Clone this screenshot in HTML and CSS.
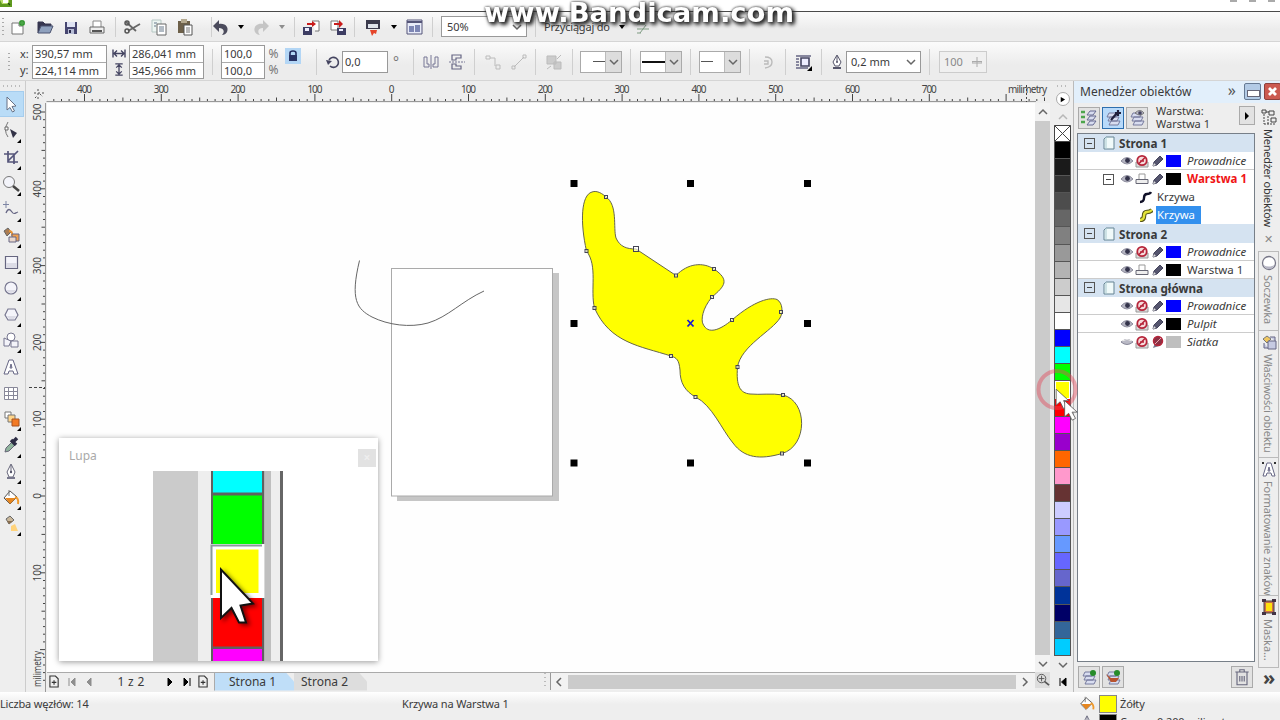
FILE: index.html
```
<!DOCTYPE html>
<html lang="pl">

<head>
    <meta charset="UTF-8">
    <title>Menedżer obiektów</title>
    <link rel="stylesheet" href="styles.css">
</head>

<body>
    <!-- icon sprite -->
    <svg class="sprite">
        <symbol id="i-new" viewBox="0 0 18 18"><path d="M3 5h7v3h4v8H3z" fill="#fff" stroke="#777"/><circle cx="13" cy="5" r="3" fill="#31922f"/><path d="M10 5h6M13 2v6" stroke="#55ad50"/></symbol>
        <symbol id="i-open" viewBox="0 0 18 18"><path d="M2 15V4h5l2 2h6v3" fill="#363650" stroke="#363650"/><path d="M2 15l3-7h12l-3 7z" fill="#8ea0bd" stroke="#4b5370"/></symbol>
        <symbol id="i-save" viewBox="0 0 18 18"><path d="M3 4h12v12H3z" fill="#464670"/><path d="M5 4h8v5H5z" fill="#dfe3f3"/><path d="M6 11h6v5H6z" fill="#b7bdd5"/><path d="M7 12h2v3H7z" fill="#29294a"/></symbol>
        <symbol id="i-print" viewBox="0 0 18 18"><path d="M5 3h8v7H5z" fill="#fff" stroke="#888"/><path d="M2 9h14v6H2z" fill="#eee" stroke="#666"/><path d="M4 13h10" stroke="#555" stroke-width="2"/></symbol>
        <symbol id="i-cut" viewBox="0 0 18 18"><path d="M3 4l10 9M5 13L17 6" stroke="#666" stroke-width="1.8"/><circle cx="4" cy="5" r="2" fill="none" stroke="#555" stroke-width="1.5"/><circle cx="4" cy="13" r="2" fill="none" stroke="#555" stroke-width="1.5"/></symbol>
        <symbol id="i-copy" viewBox="0 0 18 18"><path d="M2 2h9v12H2z" fill="#edf5f2" stroke="#b6c7c4"/><path d="M7 6h9v11H7z" fill="#fff" stroke="#666"/><path d="M9 9h5M9 11h5M9 13h5M4 5h3M4 8h2" stroke="#657789"/></symbol>
        <symbol id="i-paste" viewBox="0 0 18 18"><path d="M2 3h12v12H2z" fill="#6d6049"/><path d="M5 1h6v4H5z" fill="#b4a98f"/><path d="M8 7h8v10H8z" fill="#fff" stroke="#555"/><path d="M10 10h4M10 12h4M10 14h4" stroke="#777"/></symbol>
        <symbol id="i-undo" viewBox="0 0 18 18"><path d="M1 8l6-6v4c7-1 10 4 8 8-1 2-3 3-5 3 3-3 2-7-3-7v4z" fill="#4b4b5c"/></symbol>
        <symbol id="i-redo" viewBox="0 0 18 18"><path d="M17 8l-6-6v4C4 5 1 10 3 14c1 2 3 3 5 3-3-3-2-7 3-7v4z" fill="#c5c5c5"/></symbol>
        <symbol id="i-import" viewBox="0 0 18 18"><path d="M10 3h7v10h-4" fill="#fff" stroke="#777"/><path d="M1 9h9v8H1z" fill="#3d3d63"/><path d="M3 10h4v3H3z" fill="#eef"/><path d="M5 5h5V3l4 3-4 3V7H5z" fill="#c91c1c"/></symbol>
        <symbol id="i-export" viewBox="0 0 18 18"><path d="M2 3h7v9H2z" fill="#fff" stroke="#777"/><path d="M8 10h9v7H8z" fill="#3d3d63"/><path d="M10 11h4v2h-4z" fill="#eef"/><path d="M5 5h5V2l4 4-4 4V7H5z" fill="#c91c1c"/></symbol>
        <symbol id="i-launch" viewBox="0 0 18 18"><path d="M2 2h14v9H2z" fill="#3b3b4d"/><path d="M4 6h10v4H4z" fill="#dfe4ec"/><path d="M6 12h7l-1 4-2-1-2 3z" fill="#e5452a"/></symbol>
        <symbol id="i-welcome" viewBox="0 0 18 18"><path d="M2 2h15v14H2z" fill="#e8ebf8" stroke="#555578"/><path d="M2 3h15v2H2z" fill="#555578"/><path d="M4 8h5v6H4zM10 7h5v7h-5z" fill="#7d86b4"/></symbol>
        <symbol id="i-options" viewBox="0 0 18 18"><path d="M3 6h8M3 11h12M6 15L12 7M3 15h4" stroke="#7e9b82" fill="none"/></symbol>

        <symbol id="i-width" viewBox="0 0 14 10"><path d="M1 1v8M13 1v8M2 5h10M5 2L2 5l3 3M9 2l3 3-3 3" stroke="#444461" fill="none" stroke-width="1.4"/></symbol>
        <symbol id="i-height" viewBox="0 0 12 14"><path d="M2 1h8M2 13h8M6 2v10M3 5l3-3 3 3M3 9l3 3 3-3" stroke="#444461" fill="none" stroke-width="1.4"/></symbol>
        <symbol id="i-lock" viewBox="0 0 16 16"><path d="M5 8V5q0-2 3-2t3 2v3" fill="none" stroke="#222a5e" stroke-width="1.6"/><path d="M4 7h8v6H4z" fill="#293365"/></symbol>
        <symbol id="i-rotate" viewBox="0 0 18 18"><path d="M6 13a5 5 0 1 0-1-6" fill="none" stroke="#454560" stroke-width="1.6"/><path d="M2 7l6 1-4 4z" fill="#454560"/></symbol>
        <symbol id="i-mirror-h" viewBox="0 0 18 18"><path d="M2 4v10h5v-3H5V4zM16 4v10h-5v-3h2V4z" fill="none" stroke="#777795"/><path d="M9 2v14" stroke="#777795"/></symbol>
        <symbol id="i-mirror-v" viewBox="0 0 18 18"><path d="M4 2h9v3H8v2H4zM4 16h9v-3H8v-2H4z" fill="none" stroke="#666684" stroke-width="1.200"/><path d="M1 9h16" stroke="#777795" stroke-dasharray="2 1"/></symbol>
        <symbol id="i-connector" viewBox="0 0 18 18"><path d="M2 3h4v3H2zM12 12h4v4h-4zM6 5h5v8" fill="none" stroke="#bbb"/></symbol>
        <symbol id="i-line" viewBox="0 0 18 18"><path d="M4 14L14 4M2 13h3v3H2zM13 2h3v3h-3z" fill="none" stroke="#bbb"/></symbol>
        <symbol id="i-arrange" viewBox="0 0 18 18"><path d="M2 3h9v8H2zM9 9h7v7H9z" fill="#ccc" stroke="#bbb"/><path d="M12 6l4-4M2 16l4-3" stroke="#bbb"/></symbol>
        <symbol id="i-curve-d" viewBox="0 0 18 18"><path d="M6 4q7 0 7 5t-7 6M5 8h4v3H5" fill="none" stroke="#bbb" stroke-width="1.4"/></symbol>
        <symbol id="i-wrap" viewBox="0 0 18 18"><path d="M1 3h15M1 6h3M1 9h3M1 12h3M1 15h12" stroke="#666684" stroke-width="1.3"/><path d="M6 5h8v8H6z" fill="#eef" stroke="#444461" stroke-width="1.6"/><path d="M17 13v5h-5z"/></symbol>
        <symbol id="i-nib" viewBox="0 0 12 16"><path d="M6 1l4 7-2 4H4L2 8zM6 2v6" fill="#fff" stroke="#55556a"/><circle cx="6" cy="8" r="1" fill="#55556a"/><path d="M2 13h8v2H2z" fill="#55556a"/></symbol>

        <symbol id="t-pick" viewBox="0 0 20 20"><path d="M6 3l9 9-4 .5 2.500 4.500-2 1-2.500-4.500L6 16z" fill="#fff" stroke="#667084"/></symbol>
        <symbol id="t-shape" viewBox="0 0 20 20"><path d="M7 1q-5 8 0 15" fill="none" stroke="#777"/><path d="M4 6h3v3H4z" fill="#fff" stroke="#666"/><path d="M9 8l7 4-4 5z" fill="#333347"/></symbol>
        <symbol id="t-crop" viewBox="0 0 20 20"><path d="M7 4v11h10M3 7h10v10M7 14L17 4" fill="none" stroke="#55557a" stroke-width="1.700"/></symbol>
        <symbol id="t-zoom" viewBox="0 0 20 20"><circle cx="8" cy="8" r="5.500" fill="#f3f4fa" stroke="#777"/><path d="M12 12l6 5" stroke="#444" stroke-width="2.500"/></symbol>
        <symbol id="t-free" viewBox="0 0 20 20"><path d="M5 1v7M2 4.500h6" stroke="#7c84a3"/><path d="M5 13c2-5 4-4 6-1s3 1 6 0" fill="none" stroke="#666684" stroke-width="1.300"/></symbol>
        <symbol id="t-smart" viewBox="0 0 20 20"><path d="M3 5l4-3 3 4-4 4z" fill="#aa7d54" stroke="#666"/><path d="M8 5q4 0 3 5" stroke="#ec9432" stroke-width="2" fill="none"/><path d="M11 8h7v7h-7z" fill="#f0a050" stroke="#666684"/><path d="M8 11h7v5H8z" fill="#e9d7cc" stroke="#666684"/></symbol>
        <symbol id="t-rect" viewBox="0 0 20 20"><path d="M4.500 4.500h12v12h-12z" fill="#f4f4fa" stroke="#666680" stroke-width="1.200"/><path d="M5 11h11v5H5z" fill="#dcdce6"/></symbol>
        <symbol id="t-ellipse" viewBox="0 0 20 20"><circle cx="10" cy="10" r="6" fill="#f4f4fa" stroke="#777790" stroke-width="1.200"/><path d="M5 12h10q-2 3-5 3t-5-3" fill="#dcdce6"/></symbol>
        <symbol id="t-poly" viewBox="0 0 20 20"><path d="M7 4h7l3 6-3 5H7l-3-5z" fill="#f4f4fa" stroke="#777790" stroke-width="1.200"/><path d="M6 11h9l-2 3H8z" fill="#dcdce6"/></symbol>
        <symbol id="t-shapes" viewBox="0 0 20 20"><circle cx="10" cy="6" r="4" fill="#fff" stroke="#777790"/><path d="M3 7l7 3-2 5H3zM10 10h7v6h-7z" fill="#f4f4fa" stroke="#777790"/></symbol>
        <symbol id="t-text" viewBox="0 0 20 20"><path d="M8 3h4l5 14h-4l-1-3H8l-1 3H3zM10 7l-1 4h2z" fill="#fff" stroke="#666684"/></symbol>
        <symbol id="t-table" viewBox="0 0 20 20"><path d="M3.500 4.500h13v12h-13zM3 8.500h14M3 12.500h14M7.500 4v12M12.500 4v12" fill="#fff" stroke="#888899"/></symbol>
        <symbol id="t-blend" viewBox="0 0 20 20"><path d="M4 3h6v6H4z" fill="#fff" stroke="#777"/><path d="M7 6h7v7H7z" fill="#ffd58a" stroke="#777"/><path d="M11 10h7v7h-7z" fill="#f37a24" stroke="#a65320"/></symbol>
        <symbol id="t-dropper" viewBox="0 0 20 20"><path d="M4 17l1-4 6-6 3 3-6 6z" fill="#8fb49c" stroke="#667"/><path d="M10 5l5 5M12 7l4-4" stroke="#2c2c44" stroke-width="3.500"/></symbol>
        <symbol id="t-nib" viewBox="0 0 20 20"><path d="M10 2l4 8-2 5H8l-2-5zM10 3v6" fill="#fff" stroke="#66667a"/><circle cx="10" cy="10" r="1.200" fill="#55556a"/><path d="M6 15h8v2H6z" fill="#77778c"/></symbol>
        <symbol id="t-fill" viewBox="0 0 20 20"><path d="M3 10l6-7 7 6-7 7z" fill="#fff" stroke="#555"/><path d="M4 10h11l-6 6z" fill="#e6861f"/><path d="M14 9q4 1 3 7" stroke="#f09a2d" stroke-width="2" fill="none"/><path d="M8 2v6" stroke="#777"/></symbol>
        <symbol id="t-ifill" viewBox="0 0 20 20"><path d="M5 5l4-3 4 4-5 4z" fill="#c9b79a" stroke="#666"/><path d="M6 7h6l-4 3z" fill="#896f51"/><path d="M10 12l4-2 3 7h-7z" fill="#ffd37b"/></symbol>

        <symbol id="o-eye" viewBox="0 0 14 12"><path d="M1 6q6-7 12 0-6 6-12 0z" fill="#b5b5c2" stroke="#8c8c9c"/><circle cx="7.500" cy="5.500" r="2.400" fill="#33334a"/></symbol>
        <symbol id="o-eye-off" viewBox="0 0 14 12"><path d="M1 6q6-5 12 0-6 5-12 0z" fill="#b9b9c5" stroke="#888899"/><path d="M2 5q5-3 10 0" stroke="#eee" fill="none"/></symbol>
        <symbol id="o-noprint" viewBox="0 0 14 14"><path d="M1 8h12v5H1z" fill="#ddd" stroke="#999"/><circle cx="7" cy="6.500" r="4.700" fill="#f6dcdc" stroke="#b6253a" stroke-width="1.800"/><path d="M4 9.500l6-6M5 7h4" stroke="#b6253a" stroke-width="1.600"/></symbol>
        <symbol id="o-print" viewBox="0 0 14 14"><path d="M4 2h6v7H4z" fill="#fff" stroke="#999"/><path d="M1 7.500h12v4H1z" fill="#eee" stroke="#666674"/></symbol>
        <symbol id="o-pencil" viewBox="0 0 14 14"><path d="M2 12l1-4 6-6 3 3-6 6z" fill="#55556e" stroke="#44445c"/><path d="M2 12l1-3 2 2z" fill="#ddd"/></symbol>
        <symbol id="o-nopencil" viewBox="0 0 14 14"><path d="M2 13l2-5 4 3z" fill="#77778c"/><circle cx="7" cy="6" r="4.500" fill="#8b3144" stroke="#b6253a" stroke-width="1.500"/><path d="M4 9l6-6" stroke="#e7a4ae"/></symbol>
        <symbol id="o-page" viewBox="0 0 14 14"><path d="M4 1h8v12H2V3z" fill="#f0fafa" stroke="#658393"/><path d="M4 1v12" stroke="#a9cad0"/></symbol>
        <symbol id="o-curve" viewBox="0 0 14 14"><path d="M1 12q4 0 4-4t3-4 4-2" fill="none" stroke="#111128" stroke-width="2.400"/></symbol>
        <symbol id="o-curve-fill" viewBox="0 0 14 14"><path d="M1 12q4 0 4-4t3-4 5-2" fill="none" stroke="#55551a" stroke-width="4.500"/><path d="M1 12q4 0 4-4t3-4 5-2" fill="none" stroke="#e3e339" stroke-width="2.400"/></symbol>
        <symbol id="o-layers" viewBox="0 0 20 20"><path d="M6 17l2-4h9l-2 4zM5 13l2-4h9l-2 4zM4 9l2-4h9l-2 4z" fill="#d8ddf0" stroke="#777b9e"/></symbol>
        <symbol id="o-marks" viewBox="0 0 20 20"><path d="M2 4h4M2 9h4M2 14h4" stroke="#4ca54c" stroke-width="2.500"/><path d="M8 7l3-4h6l-3 4zM8 12l3-4h6l-3 4zM8 17l3-4h6l-3 4z" fill="#d8ddf0" stroke="#666a92"/></symbol>
        <symbol id="i-trash" viewBox="0 0 18 18"><path d="M3 4.500h12M7 4V2.500h4V4M4.500 5v11h9V5M7 8v5M9 8v5M11 8v5" fill="none" stroke="#66667c"/></symbol>
        <symbol id="p-add" viewBox="0 0 12 14"><path d="M1 1h6l3 3v9H1zM3 8h5M5.500 5.500v5" fill="none" stroke="#333" stroke-width="1.200"/></symbol>
        <symbol id="chev" viewBox="0 0 10 8"><path d="M1 2l4 4 4-4" fill="none" stroke="#666" stroke-width="1.500"/></symbol>
        <symbol id="caret" viewBox="0 0 6 4"><path d="M0 0h6L3 4z"/></symbol>
        <symbol id="cursor" viewBox="0 0 14 20"><path d="M1 1v14l3.500-3 3 6 3-1.500-3-5.500H12z" fill="#fff" stroke="#555" stroke-width=".7"/></symbol>
    </svg>

    <div class="app">
        <div class="titlebar">
            <svg class="app-icon" viewBox="0 0 12 7"><path d="M0 0h12v7H0z" fill="#5f9a1e"/><path d="M0 0h9v4H2z" fill="#b9da6c"/><path d="M3 0h5v3H3z" fill="#fff"/><path d="M8 3l2 2" stroke="#234a0d" stroke-width="1.500"/></svg>
            <span class="win-btns"><i></i><i></i><i></i></span>
        </div>

        <div class="bar standard">
            <span class="grip"></span>
            <svg><use href="#i-new"/></svg>
            <svg><use href="#i-open"/></svg>
            <svg><use href="#i-save"/></svg>
            <svg><use href="#i-print"/></svg>
            <span class="sep"></span>
            <svg><use href="#i-cut"/></svg>
            <svg><use href="#i-copy"/></svg>
            <svg><use href="#i-paste"/></svg>
            <span class="sep"></span>
            <svg><use href="#i-undo"/></svg>
            <svg class="caret"><use href="#caret"/></svg>
            <svg><use href="#i-redo"/></svg>
            <svg class="caret off"><use href="#caret"/></svg>
            <span class="sep"></span>
            <svg><use href="#i-import"/></svg>
            <svg><use href="#i-export"/></svg>
            <span class="sep"></span>
            <svg><use href="#i-launch"/></svg>
            <svg class="caret"><use href="#caret"/></svg>
            <svg><use href="#i-welcome"/></svg>
            <span class="sep"></span>
            <div class="field zoom-level"><span>50%</span><svg class="chev"><use href="#chev"/></svg></div>
            <span class="sep"></span>
            <span class="snap">Przyciągaj do</span>
            <svg class="caret"><use href="#caret"/></svg>
            <svg><use href="#i-options"/></svg>
        </div>

        <div class="bar property">
            <span class="grip"></span>
            <div class="pair labels"><span>x:</span><span>y:</span></div>
            <div class="pair boxed"><span>390,57 mm</span><span>224,114 mm</span></div>
            <div class="pair icons"><svg><use href="#i-width"/></svg><svg><use href="#i-height"/></svg></div>
            <div class="pair boxed"><span>286,041 mm</span><span>345,966 mm</span></div>
            <span class="sep"></span>
            <div class="pair boxed scale"><span>100,0</span><span>100,0</span></div>
            <div class="pair percent"><span>%</span><span>%</span></div>
            <span class="lock"><svg><use href="#i-lock"/></svg></span>
            <span class="sep"></span>
            <svg class="to-end"><use href="#i-rotate"/></svg>
            <div class="field angle">0,0</div>
            <span class="degree">°</span>
            <span class="sep"></span>
            <svg><use href="#i-mirror-h"/></svg>
            <svg><use href="#i-mirror-v"/></svg>
            <span class="sep"></span>
            <svg><use href="#i-connector"/></svg>
            <svg><use href="#i-line"/></svg>
            <span class="sep"></span>
            <svg><use href="#i-arrange"/></svg>
            <span class="sep"></span>
            <div class="line-pick start"><i></i><b><svg class="chev"><use href="#chev"/></svg></b></div>
            <span class="sep"></span>
            <div class="line-pick style"><i></i><b><svg class="chev"><use href="#chev"/></svg></b></div>
            <span class="sep"></span>
            <div class="line-pick finish"><i></i><b><svg class="chev"><use href="#chev"/></svg></b></div>
            <span class="sep"></span>
            <svg><use href="#i-curve-d"/></svg>
            <span class="sep"></span>
            <svg><use href="#i-wrap"/></svg>
            <span class="sep"></span>
            <svg class="nib"><use href="#i-nib"/></svg>
            <div class="field outline-w"><span>0,2 mm</span><svg class="chev"><use href="#chev"/></svg></div>
            <span class="sep"></span>
            <div class="field smooth"><span>100</span><svg viewBox="0 0 10 10"><path d="M0 4.500h10v1.500H0zM5 0v10" fill="none" stroke="#aaa"/></svg></div>
        </div>

        <div class="workspace">
            <div class="toolbox">
                <span class="dots"></span>
                <span class="tool active"><svg><use href="#t-pick"/></svg></span>
                <span class="tool more"><svg><use href="#t-shape"/></svg></span>
                <span class="tool more"><svg><use href="#t-crop"/></svg></span>
                <span class="tool more"><svg><use href="#t-zoom"/></svg></span>
                <span class="tool more"><svg><use href="#t-free"/></svg></span>
                <span class="tool more"><svg><use href="#t-smart"/></svg></span>
                <span class="tool more"><svg><use href="#t-rect"/></svg></span>
                <span class="tool more"><svg><use href="#t-ellipse"/></svg></span>
                <span class="tool more"><svg><use href="#t-poly"/></svg></span>
                <span class="tool more"><svg><use href="#t-shapes"/></svg></span>
                <span class="tool"><svg><use href="#t-text"/></svg></span>
                <span class="tool"><svg><use href="#t-table"/></svg></span>
                <span class="tool more"><svg><use href="#t-blend"/></svg></span>
                <span class="tool more"><svg><use href="#t-dropper"/></svg></span>
                <span class="tool more"><svg><use href="#t-nib"/></svg></span>
                <span class="tool more"><svg><use href="#t-fill"/></svg></span>
                <span class="tool more"><svg><use href="#t-ifill"/></svg></span>
            </div>

            <div class="document">
                <svg class="ruler-h" id="ruler-h" width="1027" height="22"></svg>
                <svg class="ruler-v" id="ruler-v" width="20" height="589"></svg>
                <svg class="canvas" viewBox="47 103 988 569" width="988" height="569">
                    <path d="M553 273h6v228H397v-5h156z" fill="#c6c6c6"/>
                    <rect x="391.500" y="268.500" width="161" height="227.500" fill="#fff" stroke="#aaa"/>
                    <path d="M359.500 260.500C350 300 357 309 372 317C388 325 410 328 428 323C448 317 462 301 484 291" fill="none" stroke="#666"/>
                    <path d="M606 197C618 205 613 228 616 238C620 247 627 249 636 249L676 275.500C688 263 703 262 714 269C730 280 725 286 712 297C702 309 701 320 703 324C708 335 720 330 732 320C755 300 771 297 777 299.500C783 303 783 313 780 318C772 331 741 346 737.500 367C736 386 740 393 750 394C760 395 772 393 783 395C808 401 808 446 782 453.500C760 460 744 458 733 443C722 430 712 405 695.500 397C685 391 680 383 680 370C679 360 677 358 671 356C640 346 610 343 594.500 308C590 290 598 266 586.500 251C580 222 581 195 592 192C597 190 603 194 606 197Z" fill="#ff0" stroke="#66664a"/>
                    <g id="nodes" fill="#fff" fill-opacity=".6" stroke="#445"></g>
                    <path d="M687.500 320l6 6.500M693.500 320l-6 6.500" stroke="#1a1ad0" stroke-width="1.800"/>
                    <g id="handles"></g>
                </svg>
                <div class="vscroll">
                    <svg class="chev up"><use href="#chev"/></svg>
                    <span class="thumb"></span>
                    <svg class="chev"><use href="#chev"/></svg>
                </div>
                <div class="page-bar">
                    <svg class="add"><use href="#p-add"/></svg>
                    <svg class="nav off" viewBox="0 0 10 10"><path d="M2 1v8M8 1L4 5l4 4z"/></svg>
                    <svg class="nav off" viewBox="0 0 10 10"><path d="M7 1L3 5l4 4z"/></svg>
                    <span class="count">1 z 2</span>
                    <svg class="nav" viewBox="0 0 10 10"><path d="M3 1l4 4-4 4z"/></svg>
                    <svg class="nav" viewBox="0 0 10 10"><path d="M2 1l4 4-4 4zM8 1v8"/></svg>
                    <svg class="add"><use href="#p-add"/></svg>
                    <span class="page-tab current">Strona 1</span>
                    <span class="page-tab">Strona 2</span>
                    <span class="splitter"></span>
                    <div class="hscroll">
                        <svg class="chev left"><use href="#chev"/></svg>
                        <span class="thumb"></span>
                        <svg class="chev right"><use href="#chev"/></svg>
                    </div>
                </div>
                <span class="nav-zoom"><svg viewBox="0 0 16 16"><circle cx="7" cy="7" r="4.500" fill="none" stroke="#555"/><path d="M7 4v6M4 7h6" stroke="#555"/><path d="M10 10l5 4" stroke="#555" stroke-width="2"/></svg></span>

                <div class="lupa">
                    <div class="lupa-head"><span>Lupa</span><b>×</b></div>
                    <svg viewBox="153 471 131 190" width="131" height="190">
                        <rect x="153" y="471" width="45" height="190" fill="#cbcbcb"/>
                        <rect x="198" y="471" width="85" height="190" fill="#eee"/>
                        <rect x="211" y="471" width="53.500" height="190" fill="#606060"/>
                        <rect x="264.500" y="471" width="6.500" height="190" fill="#bfbfbf"/>
                        <rect x="280" y="471" width="3" height="190" fill="#666"/>
                        <rect x="213" y="471" width="49" height="21.500" fill="#0ff"/>
                        <rect x="213" y="495.500" width="49" height="48.500" fill="#0f0"/>
                        <rect x="211" y="544" width="53.500" height="54" fill="#fff"/>
                        <path d="M211.500 595v-49.500H262" fill="none" stroke="#8a9a9a" stroke-width="2"/>
                        <rect x="216" y="549.500" width="42.500" height="43.500" fill="#ff0"/>
                        <rect x="213" y="598" width="49" height="48.500" fill="#f00"/>
                        <rect x="213" y="649" width="49" height="12" fill="#f0f"/>
                        <path class="big-cursor" d="M221 569.500V618l10.500-10 7.500 14.500h7L240.500 605.500l12.500-2z"/>
                    </svg>
                </div>
            </div>

            <div class="palette">
                <span class="dots"></span>
                <span class="round"><svg viewBox="0 0 8 8"><path d="M2 1l5 3-5 3z"/></svg></span>
                <svg class="chev up off"><use href="#chev"/></svg>
                <svg class="none" viewBox="0 0 17 17" preserveAspectRatio="none"><path d="M.5.5h16v16H.5zM.5.5l16 16M16.500.5l-16 16" fill="#fff" stroke="#444"/></svg>
                <div class="swatches" id="swatches"></div>
                <svg class="chev down"><use href="#chev"/></svg>
                <svg class="home" viewBox="0 0 10 10"><path d="M2 1v8M8 1L3.500 5 8 9z"/></svg>
                <svg class="click" viewBox="0 0 48 56"><circle cx="21" cy="20.500" r="18.500" fill="none" stroke="#e24a5c" stroke-opacity=".45" stroke-width="4"/><use href="#cursor" x="19" y="19" width="16" height="23"/><use href="#cursor" x="27.500" y="30.500" width="16" height="23"/></svg>
            </div>

            <div class="docker">
                <div class="docker-title">
                    <span>Menedżer obiektów</span>
                    <em>»</em>
                    <i class="mini"></i>
                    <i class="close"><svg viewBox="0 0 15 15"><path d="M4 4l7 7M11 4l-7 7" stroke="#fff" stroke-width="2.800"/></svg></i>
                </div>
                <div class="docker-body">
                    <div class="manager">
                        <div class="manager-bar">
                            <span class="sq"><svg><use href="#o-marks"/></svg></span>
                            <span class="sq on"><svg viewBox="0 0 20 20"><use href="#o-layers"/><path d="M8 12l6-7M12 5h6M15 2v6" stroke="#20203c" stroke-width="2.200"/></svg></span>
                            <span class="sq"><svg viewBox="0 0 20 20"><use href="#o-layers"/><path d="M8 5q5-5 9 0-4 4-9 0z" fill="#b9b9c8" stroke="#777"/><circle cx="13" cy="5" r="1.800" fill="#444460"/></svg></span>
                            <p>Warstwa:<br>Warstwa 1</p>
                            <span class="flyout"><svg viewBox="0 0 8 8"><path d="M2 0l4 4-4 4z"/></svg></span>
                        </div>
                        <div class="tree">
                            <div class="row page"><i class="exp"></i><svg><use href="#o-page"/></svg><span>Strona 1</span></div>
                            <div class="row layer"><i></i><svg><use href="#o-eye"/></svg><svg><use href="#o-noprint"/></svg><svg><use href="#o-pencil"/></svg><b class="blue"></b><em>Prowadnice</em></div>
                            <div class="row layer noline"><i class="exp"></i><svg><use href="#o-eye"/></svg><svg><use href="#o-print"/></svg><svg><use href="#o-pencil"/></svg><b class="black"></b><strong>Warstwa 1</strong></div>
                            <div class="row object"><svg><use href="#o-curve"/></svg><span>Krzywa</span></div>
                            <div class="row object selected"><svg><use href="#o-curve-fill"/></svg><span>Krzywa</span></div>
                            <div class="row page"><i class="exp"></i><svg><use href="#o-page"/></svg><span>Strona 2</span></div>
                            <div class="row layer"><i></i><svg><use href="#o-eye"/></svg><svg><use href="#o-noprint"/></svg><svg><use href="#o-pencil"/></svg><b class="blue"></b><em>Prowadnice</em></div>
                            <div class="row layer"><i></i><svg><use href="#o-eye"/></svg><svg><use href="#o-print"/></svg><svg><use href="#o-pencil"/></svg><b class="black"></b><span>Warstwa 1</span></div>
                            <div class="row page"><i class="exp"></i><svg><use href="#o-page"/></svg><span>Strona główna</span></div>
                            <div class="row layer"><i></i><svg><use href="#o-eye"/></svg><svg><use href="#o-noprint"/></svg><svg><use href="#o-pencil"/></svg><b class="blue"></b><em>Prowadnice</em></div>
                            <div class="row layer"><i></i><svg><use href="#o-eye"/></svg><svg><use href="#o-noprint"/></svg><svg><use href="#o-pencil"/></svg><b class="black"></b><em>Pulpit</em></div>
                            <div class="row layer noline"><i></i><svg><use href="#o-eye-off"/></svg><svg><use href="#o-noprint"/></svg><svg><use href="#o-nopencil"/></svg><b class="grey"></b><em>Siatka</em></div>
                        </div>
                        <div class="manager-foot">
                            <span class="sq"><svg viewBox="0 0 20 20"><use href="#o-layers"/><circle cx="14" cy="6" r="3" fill="#278c2a"/></svg></span>
                            <span class="sq"><svg viewBox="0 0 20 20"><use href="#o-layers"/><path d="M3 7l5 4h8l-3 4H8z" fill="#b8532f"/><circle cx="14" cy="6" r="3" fill="#278c2a"/></svg></span>
                            <span class="sq trash"><svg><use href="#i-trash"/></svg></span>
                        </div>
                    </div>
                    <div class="side-tabs">
                        <div class="side-tab open">
                            <svg viewBox="0 0 16 16"><path d="M1 1h4v3H1zM8 2h5v4H8zM10 9h5v4h-5zM5 3h3" fill="none" stroke="#444"/><path d="M3 5v10M7 7v8M3 15h12" fill="none" stroke="#444" stroke-dasharray="2 1"/></svg>
                            <span>Menedżer obiektów</span>
                            <b>✕</b>
                        </div>
                        <div class="side-tab lens">
                            <svg viewBox="0 0 16 16"><circle cx="8" cy="8" r="6.500" fill="#fff" stroke="#777788" stroke-width="1.300"/><path d="M2.500 10q5 3 11 0-2 4-5.500 4t-5.500-4" fill="#b5b5c4"/></svg>
                            <span>Soczewka</span>
                        </div>
                        <div class="side-tab props">
                            <svg viewBox="0 0 16 16"><path d="M2 5l4-3 4 3-4 4z" fill="#f0c75f" stroke="#777"/><path d="M7 7h8v8H7zM3 9v5h4M9 3h5v4" fill="#c6cae2" stroke="#666684"/></svg>
                            <span>Właściwości obiektu</span>
                        </div>
                        <div class="side-tab chars">
                            <svg viewBox="0 0 16 16"><path d="M6 2h4l4 13h-3l-1-3H6l-1 3H2zM8 6L7 10h2z" fill="#fff" stroke="#666684"/><path d="M1 1h2v2H1zM13 1h2v2h-2z" fill="#333"/></svg>
                            <span>Formatowanie znaków</span>
                        </div>
                        <div class="side-tab mask">
                            <svg viewBox="0 0 16 16"><path d="M3 2h10v12H3z" fill="#c96f4a" stroke="#444"/><path d="M5 4h6v8H5z" fill="#ffe10a"/><path d="M1 0h4v3H1zM11 0h4v3h-4zM1 13h4v3H1zM11 13h4v3h-4z" fill="#443344"/></svg>
                            <span>Maska...</span>
                        </div>
                        <em>»</em>
                    </div>
                </div>
            </div>
        </div>

        <div class="status">
            <span class="nodes-count">Liczba węzłów: 14</span>
            <span class="what">Krzywa na Warstwa 1</span>
            <svg><use href="#t-fill"/></svg>
            <b class="yellow"></b>
            <span>Żółty</span>
            <span class="hint">( 390,681; 457,846 ) &nbsp; Kliknij obiekt dwukrotnie, aby go obrócić/pochylić; dwukrotne kliknięcie narzędzia zaznacza wszystkie obiekty; Shift+kliknięcie</span>
            <svg><use href="#t-nib"/></svg>
            <b class="black"></b>
            <span>Czarny 0,200 milimetry</span>
        </div>

        <svg class="watermark" width="330" height="36"><text x="9" y="22" textLength="310" lengthAdjust="spacingAndGlyphs">www.Bandicam.com</text></svg>
    </div>

    <script src="script.js"></script>
</body>
</html>
```
FILE: styles.css
```
* {
    box-sizing: border-box;
}

body {
    margin: 0;
    font-family: "Noto Sans", "Liberation Sans", sans-serif;
    font-size: 12px;
    line-height: 1;
    color: #3a3a3a;
}

i, em {
    font-style: normal;
}

.sprite {
    display: none;
}

.app {
    position: relative;
    width: 1280px;
    height: 720px;
    overflow: hidden;
    background: #eee;
    display: flex;
    flex-direction: column;
}

.titlebar {
    height: 12px;
    flex: none;
    background: #fff;
    border-bottom: 1px solid #4a4a4a;
    display: flex;
    justify-content: space-between;
}

.app-icon {
    width: 12px;
    height: 7px;
}

.win-btns {
    display: flex;
    gap: 12px;
    padding-right: 5px;
}

.win-btns i {
    width: 7px;
    height: 2px;
    background: #aaa;
}

/* toolbars */
.bar {
    flex: none;
    display: grid;
    align-items: center;
    justify-items: center;
    background: linear-gradient(#fbfbfb, #ececec 60%);
    border-bottom: 1px solid #d5d5d5;
}

.bar > svg {
    width: 18px;
    height: 18px;
}

.standard {
    height: 30px;
    grid-template-columns: 5px 26px 27px 26px 26px 6px 32px 22px 30px 12px 18px 22px 18px 24px 1px 32px 22px 6px 36px 6px 34px 2px 94px 9px 81px 10px 32px;
}

.property {
    height: 39px;
    padding-top: 1px;
    grid-template-columns: 18px 14px 75px 22px 75px 9px 52px 17px 22px 13px 25px 46px 16px 10px 34px 18px 9px 36px 15px 10px 36px 1px 49px 9px 51px 9px 50px 9px 35px 1px 35px 1px 24px 75px 9px 57px;
}

.grip {
    width: 2px;
    height: 18px;
    background: repeating-linear-gradient(#aaa 0 1px, transparent 1px 4px);
}

.sep {
    justify-self: end;
    width: 1px;
    height: 20px;
    background: #cfcfcf;
}

.property .sep {
    height: 26px;
}

.bar > .caret {
    width: 6px;
    height: 4px;
}

.off {
    opacity: .4;
}

.chev {
    width: 10px;
    height: 8px;
}

.field {
    border: 1px solid #999;
    background: #fff;
    height: 22px;
    font-size: 11px;
    padding: 0 4px;
    display: flex;
    align-items: center;
    justify-content: space-between;
    justify-self: end;
}

.zoom-level {
    width: 86px;
    height: 21px;
    padding-left: 5px;
}

.snap {
    justify-self: start;
    padding-left: 8px;
    font-size: 11px;
    letter-spacing: -.2px;
    white-space: nowrap;
}

.pair {
    display: flex;
    flex-direction: column;
    font-size: 11px;
}

.pair span {
    height: 16px;
    line-height: 16px;
    white-space: nowrap;
}

.labels {
    justify-self: start;
    padding-left: 2px;
}

.boxed {
    width: 75px;
    border: 1px solid #999;
    background: #fff;
}

.boxed span {
    padding-left: 2px;
}

.boxed span + span {
    border-top: 1px solid #aaa;
    line-height: 15px;
}

.icons {
    gap: 3px;
    align-items: center;
    padding-left: 2px;
}

.icons svg {
    width: 14px;
    height: 13px;
}

.scale {
    width: 44px;
    justify-self: end;
}

.percent {
    color: #777;
    font-size: 12px;
}

.lock {
    width: 16px;
    height: 16px;
    margin-bottom: 12px;
    background: #b3d6f5;
}

.lock svg {
    width: 16px;
    height: 16px;
}

.bar > .to-end {
    justify-self: end;
}

.angle {
    width: 46px;
    padding-left: 2px;
}

.degree {
    color: #777;
    font-size: 14px;
}

.line-pick {
    width: 42px;
    height: 22px;
    border: 1px solid #aaa;
    background: #fff;
    display: flex;
    align-items: center;
    justify-content: space-between;
    justify-self: end;
}

.line-pick i {
    width: 12px;
    height: 1px;
    margin-left: 12px;
    background: #555;
}

.line-pick.style i {
    width: 23px;
    height: 2px;
    margin-left: 1px;
    background: #111;
}

.line-pick.finish i {
    margin-left: 1px;
}

.line-pick b {
    width: 16px;
    height: 20px;
    background: #ddd;
    border-left: 1px solid #bbb;
    display: flex;
    align-items: center;
    justify-content: center;
}

.bar > .nib {
    width: 12px;
    height: 16px;
    margin-left: 6px;
}

.outline-w {
    width: 75px;
}

.smooth {
    width: 48px;
    background: #f0f0f0;
    border-color: #ccc;
    color: #888;
}

.smooth svg {
    width: 10px;
    height: 10px;
}

/* workspace */
.workspace {
    height: 611px;
    flex: none;
    display: flex;
}

.toolbox {
    width: 26px;
    flex: none;
    border-right: 1px solid #ccc;
    display: flex;
    flex-direction: column;
}

.dots {
    width: 18px;
    height: 2px;
    margin: 4px 0 4px 3px;
    background: repeating-linear-gradient(90deg, #bbb 0 1px, transparent 1px 4px);
}

.tool {
    position: relative;
    height: 26.2px;
    width: 24px;
    padding: 4px 0 0 1px;
}

.tool svg {
    display: block;
    width: 20px;
    height: 20px;
}

.tool.active {
    background: #b9dcf7;
    border: 1px solid #a5cdee;
    border-left: 0;
    padding-top: 2px;
}

.tool.more::after {
    content: "";
    position: absolute;
    right: 3px;
    bottom: 0;
    border: 2.5px solid #000;
    border-top-color: transparent;
    border-left-color: transparent;
}

.document {
    position: relative;
    width: 1027px;
    flex: none;
    display: grid;
    grid-template-columns: 21px 988px 18px;
    grid-template-rows: 22px 569px 20px;
    background: #eee;
}

.ruler-h {
    grid-column: 1 / 4;
    grid-row: 1;
}

.ruler-v {
    grid-column: 1;
    grid-row: 2 / 4;
}

.ruler-h,
.ruler-v {
    font-size: 10px;
    fill: #444;
}

.canvas {
    grid-column: 2;
    grid-row: 2;
    background: #fefefe;
}

.vscroll {
    grid-column: 3;
    grid-row: 2;
    width: 15px;
    background: #f2f2f2;
    display: flex;
    flex-direction: column;
    align-items: center;
    padding: 5px 0 4px;
    gap: 5px;
}

.vscroll .thumb {
    flex: 1;
    width: 15px;
    background: #cbcbcb;
}

.up {
    transform: scaleY(-1);
}

.page-bar {
    grid-column: 2;
    grid-row: 3;
    display: flex;
    align-items: center;
    height: 18px;
    border-top: 1px solid #aaa;
}

.add {
    width: 11px;
    height: 13px;
    margin-left: 2px;
}

.nav {
    width: 10px;
    height: 10px;
    margin-left: 7px;
    stroke: #000;
    fill: #000;
}

.count {
    width: 68px;
    margin-left: 3px;
    text-align: center;
    letter-spacing: .3px;
}

.count + .nav {
    margin-left: 0;
}

.nav + .add {
    margin-left: 6px;
}

.page-tab {
    height: 18px;
    width: 73px;
    line-height: 17px;
    padding-left: 7px;
    background: #ddd;
    clip-path: polygon(0 0, calc(100% - 8px) 0, 100% 9px, 100% 100%, 0 100%);
}

.page-tab.current {
    width: 80px;
    margin-left: 5px;
    padding-left: 14px;
    background: #bfdef8;
    border-left: 1px solid #aaa;
}

.splitter {
    flex: 1;
    align-self: stretch;
    border-right: 1px solid #999;
    background: repeating-linear-gradient(#bbb 0 1px, transparent 1px 4px) no-repeat right 4px top / 2px 16px;
}

.hscroll {
    width: 484px;
    flex: none;
    height: 17px;
    display: flex;
    align-items: center;
    gap: 4px;
    padding: 0 5px 0 3px;
    background: #f2f2f2;
}

.hscroll .thumb {
    flex: 1;
    height: 14px;
    background: #cbcbcb;
}

.left {
    transform: rotate(90deg);
}

.right {
    transform: rotate(-90deg);
}

.nav-zoom {
    grid-column: 3;
    grid-row: 3;
    width: 15px;
    height: 16px;
    background: #ddd;
}

.nav-zoom svg {
    width: 15px;
    height: 15px;
}

/* magnifier window floating over the canvas */
.lupa {
    position: absolute;
    left: 33px;
    top: 357px;
    width: 319px;
    height: 223px;
    background: #fff;
    box-shadow: 0 1px 6px rgba(0, 0, 0, .4);
    display: flex;
    flex-direction: column;
}

.lupa > svg {
    margin-left: 94px;
}

.lupa-head {
    height: 33px;
    flex: none;
    display: flex;
    justify-content: space-between;
    align-items: center;
    padding: 4px 2px 0 10px;
    color: #aaa;
}

.lupa-head span {
    margin-top: -2px;
}

.lupa-head b {
    width: 18px;
    height: 18px;
    margin-top: 2px;
    background: #e2e2e2;
    color: #eee;
    line-height: 18px;
    text-align: center;
}

.big-cursor {
    fill: #fff;
    stroke: #111;
    stroke-width: 2;
    filter: drop-shadow(3px 2px 2px rgba(0, 0, 0, .5));
}

/* palette */
.palette {
    position: relative;
    width: 20px;
    flex: none;
    display: flex;
    flex-direction: column;
    align-items: center;
    padding-right: 1px;
}

.palette .dots {
    width: 12px;
    margin: 4px 0 5px;
}

.round {
    width: 14px;
    height: 14px;
    border: 1px solid #aaa;
    border-radius: 50%;
    background: #fff;
    display: flex;
    align-items: center;
    justify-content: center;
}

.round svg {
    width: 7px;
    height: 7px;
}

.palette .chev.off {
    margin: 7px 0;
    height: 8px;
}

.none {
    width: 17px;
    height: 17px;
    margin-top: -3px;
}

.swatches {
    width: 17px;
    height: 514px;
    display: flex;
    flex-direction: column;
    background: #444;
    border: solid #555;
    border-width: 0 1px;
}

.swatches i {
    flex: 1;
    border-bottom: 1px solid #555;
}

.swatches i.hot {
    border: 1px solid #fff;
}

.palette .down {
    margin-top: 5px;
}

.home {
    width: 10px;
    height: 10px;
    margin-top: 8px;
    stroke: #000;
}

.click {
    position: absolute;
    left: -17px;
    top: 288px;
    width: 48px;
    height: 56px;
    z-index: 2;
}

/* docker */
.docker {
    flex: 1;
    border-left: 1px solid #bbb;
    display: flex;
    flex-direction: column;
}

.docker-title {
    height: 22px;
    flex: none;
    display: flex;
    align-items: center;
    gap: 3px;
    padding: 0 0 1px 6px;
    background: #e2effb;
}

.docker-title span {
    flex: 1;
}

.docker-title em {
    font-size: 16px;
    margin: -4px 5px 0 0;
    color: #555;
}

.docker-title i {
    width: 17px;
    height: 17px;
    border: 1px solid #667a94;
    border-radius: 2px;
    background: #b3cbe6;
}

.mini::after {
    content: "";
    display: block;
    width: 11px;
    height: 5px;
    margin: 6px 2px;
    border: 1px solid #667;
    background: #fff;
}

.docker-title .close {
    background: #cb5a50;
    border-color: #8c403c;
    margin-right: -1px;
}

.close svg {
    display: block;
    width: 15px;
    height: 15px;
}

.docker-body {
    flex: 1;
    display: flex;
}

.manager {
    width: 183px;
    flex: none;
    padding: 4px 1px 0 3px;
    display: flex;
    flex-direction: column;
}

.manager-bar {
    height: 27px;
    flex: none;
    display: flex;
    gap: 2px;
    align-items: flex-start;
    padding-left: 1px;
}

.manager-bar p {
    flex: 1;
    margin: -3px 0 0 6px;
    font-size: 11px;
    line-height: 13px;
}

.sq {
    width: 22px;
    height: 22px;
    border: 1px solid #aaa;
    background: #e2e2e2;
}

.sq svg {
    display: block;
    width: 20px;
    height: 20px;
}

.sq.on {
    background: #b8dafa;
    border-color: #2d6fae;
}

.flyout {
    width: 16px;
    height: 19px;
    margin: -1px 1px 0 0;
    border: 1px solid #aaa;
    background: #e2e2e2;
    display: flex;
    align-items: center;
    justify-content: center;
}

.flyout svg {
    width: 8px;
    height: 8px;
}

.tree {
    width: 178px;
    height: 529px;
    margin-top: -1px;
    flex: none;
    background: #fff;
    border: 1px solid #777f88;
}

.row {
    height: 18.1px;
    display: grid;
    align-items: center;
    line-height: 18px;
    white-space: nowrap;
}

.row svg {
    width: 14px;
    height: 14px;
}

.page {
    grid-template-columns: 24px 17px auto;
    background: #d5e3f1;
    font-weight: bold;
    font-size: 11.7px;
}

.exp {
    width: 11px;
    height: 11px;
    margin-left: 6px;
    border: 1px solid #555;
    background: linear-gradient(#444, #444) no-repeat center / 5px 1px #fff;
}

.page .exp {
    background-color: transparent;
}

.layer {
    grid-template-columns: 42px 15px 16px 15px 21px auto;
    font-size: 11.5px;
    border-bottom: 1px solid #ccc;
}

.layer .exp {
    margin-left: 25px;
}

.noline {
    border-bottom: 0;
}

.row em {
    font-style: italic;
}

.row strong {
    color: #f01414;
}

.layer b {
    width: 15px;
    height: 12px;
}

.blue {
    background: #00f;
}

.black {
    background: #000;
}

.grey {
    background: #bfbfbf;
}

.yellow {
    background: #ff0;
}

.object {
    grid-template-columns: 18px auto;
    padding-left: 61px;
    justify-content: start;
    font-size: 11.3px;
}

.selected span {
    background: #3390ee;
    color: #fff;
    padding-right: 6px;
    box-shadow: -1px 0 #3390ee;
}

.manager-foot {
    display: flex;
    gap: 2px;
    padding: 4px 0 0 1px;
}

.trash {
    margin-left: auto;
    margin-right: 3px;
}

/* vertical docker tabs */
.side-tabs {
    flex: 1;
    display: flex;
    flex-direction: column;
    padding-top: 4px;
}

.side-tab {
    writing-mode: vertical-rl;
    width: 21px;
    margin-left: 1px;
    display: flex;
    align-items: center;
    padding-top: 3px;
    gap: 4px;
    border: 1px solid #bbb;
    border-bottom: 0;
    color: #888;
    font-size: 11px;
    letter-spacing: -.1px;
    white-space: nowrap;
}

.side-tab svg {
    width: 16px;
    height: 16px;
    flex: none;
}

.open {
    height: 144px;
    border: 0;
    color: #333;
    padding-top: 2px;
    letter-spacing: -.25px;
}

.open b {
    writing-mode: horizontal-tb;
    margin-top: 2px;
    font-weight: normal;
    color: #888;
}

.lens {
    height: 79px;
}

.props {
    height: 127px;
    letter-spacing: -.25px;
}

.chars {
    height: 138px;
}

.mask {
    height: 73px;
    border-bottom: 1px solid #bbb;
}

.side-tabs em {
    padding-left: 6px;
    font-size: 20px;
    font-weight: bold;
    color: #444;
}

/* status bar */
.status {
    flex: 1;
    overflow: hidden;
    display: grid;
    grid-template-columns: 402px 677px 20px 21px auto;
    grid-template-rows: 20px 17px;
    align-items: center;
    padding-top: 2px;
    font-size: 11px;
    letter-spacing: -.15px;
    white-space: nowrap;
    background: linear-gradient(#fff, #eee 12px);
}

.status > span {
    margin-top: -2px;
}

.status svg {
    width: 18px;
    height: 18px;
    margin-left: -1px;
}

.status b {
    width: 18px;
    height: 18px;
    border: 1px solid #888;
}

.status .hint {
    grid-column: 1 / 3;
    margin-top: 5px;
}

.watermark {
    position: absolute;
    left: 475px;
    top: 0;
    filter: drop-shadow(2px 2px 2px #222) drop-shadow(0 0 1px #333);
}

.watermark text {
    font: bold 27px "DejaVu Sans", sans-serif;
    fill: #fff;
}
```
FILE: script.js
```
const NS = 'http://www.w3.org/2000/svg';
const STEP = 7.68; // 10 mm at 50% zoom

function add(parent, tag, attrs, text) {
    const el = document.createElementNS(NS, tag);
    for (const k in attrs) el.setAttribute(k, attrs[k]);
    if (text !== undefined) el.textContent = text;
    parent.appendChild(el);
}

// horizontal ruler, zero at the left page edge
const h = document.getElementById('ruler-h');
let d = '';
for (let i = -44; i <= 85; i++) {
    const x = 365.7 + i * STEP;
    d += `M${x.toFixed(1)} 20v-${i % 10 === 0 ? 7 : i % 5 === 0 ? 3.5 : 2}`;
    if (i % 10 === 0 && i < 80) {
        add(h, 'text', { x: x, y: 12, 'text-anchor': 'middle', textLength: i === 0 ? 5 : 15 }, Math.abs(i * 10));
    }
}
add(h, 'path', { d: d, stroke: '#444' });
add(h, 'path', { d: 'M20.5 20.5H1010', stroke: '#999' });
add(h, 'path', { d: 'M1000.500 4v17', stroke: '#444', 'stroke-dasharray': '2 2' });
add(h, 'text', { x: 982, y: 12, textLength: 39 }, 'milimetry');
add(h, 'path', { d: 'M8 12h10M12 8v10M9 17l2-2M14 13l3 3', fill: 'none', stroke: '#555', 'stroke-dasharray': '2 2' });

// vertical ruler
const v = document.getElementById('ruler-v');
d = '';
for (let i = -24; i <= 50; i++) {
    const y = 393 - i * STEP;
    d += `M19 ${y.toFixed(1)}h-${i % 10 === 0 ? 5 : i % 5 === 0 ? 3.5 : 2}`;
    if (i % 10 === 0 && i > -20) {
        add(v, 'text', { transform: `translate(14.500 ${y}) rotate(-90)`, 'text-anchor': 'middle' }, Math.abs(i * 10));
    }
}
add(v, 'path', { d: d, stroke: '#444' });
add(v, 'path', { d: 'M19.500 0V589', stroke: '#999' });
add(v, 'path', { d: 'M3 284.500h16', stroke: '#444', 'stroke-dasharray': '3 2' });
add(v, 'text', { transform: 'translate(14.500 584) rotate(-90)', textLength: 36, lengthAdjust: 'spacingAndGlyphs' }, 'milimetry');

// curve nodes
const nodes = document.getElementById('nodes');
[[606, 197], [676, 275.5], [714, 269], [712, 297], [732, 320], [781, 312], [737.5, 367], [783, 395],
 [782, 453.5], [695.5, 397], [671, 356], [594.5, 308], [586.5, 251]].forEach(([x, y]) => {
    add(nodes, 'rect', { x: x - 1.5, y: y - 1.5, width: 3, height: 3 });
});
add(nodes, 'rect', { x: 633.5, y: 246.5, width: 5, height: 5 });

const handles = document.getElementById('handles');
[183.5, 323.5, 463].forEach(y => [574, 690.5, 807.5].forEach(x => {
    if (x === 690.5 && y === 323.5) return;
    add(handles, 'rect', { x: x - 3.5, y: y - 3.5, width: 7, height: 7 });
}));

const colors = ['#000', '#1a1a1a', '#333', '#4d4d4d', '#666', '#808080', '#999', '#b3b3b3', '#ccc', '#e6e6e6', '#fff',
    '#00f', '#0ff', '#0f0', '#ff0', '#f00', '#f0f', '#90c', '#f60', '#f9c', '#633', '#ccf', '#99f', '#69f', '#66f',
    '#66c', '#039', '#006', '#369', '#0cf'];
document.getElementById('swatches').innerHTML = colors
    .map(c => `<i${c === '#ff0' ? ' class="hot"' : ''} style="background:${c}"></i>`).join('');
```
